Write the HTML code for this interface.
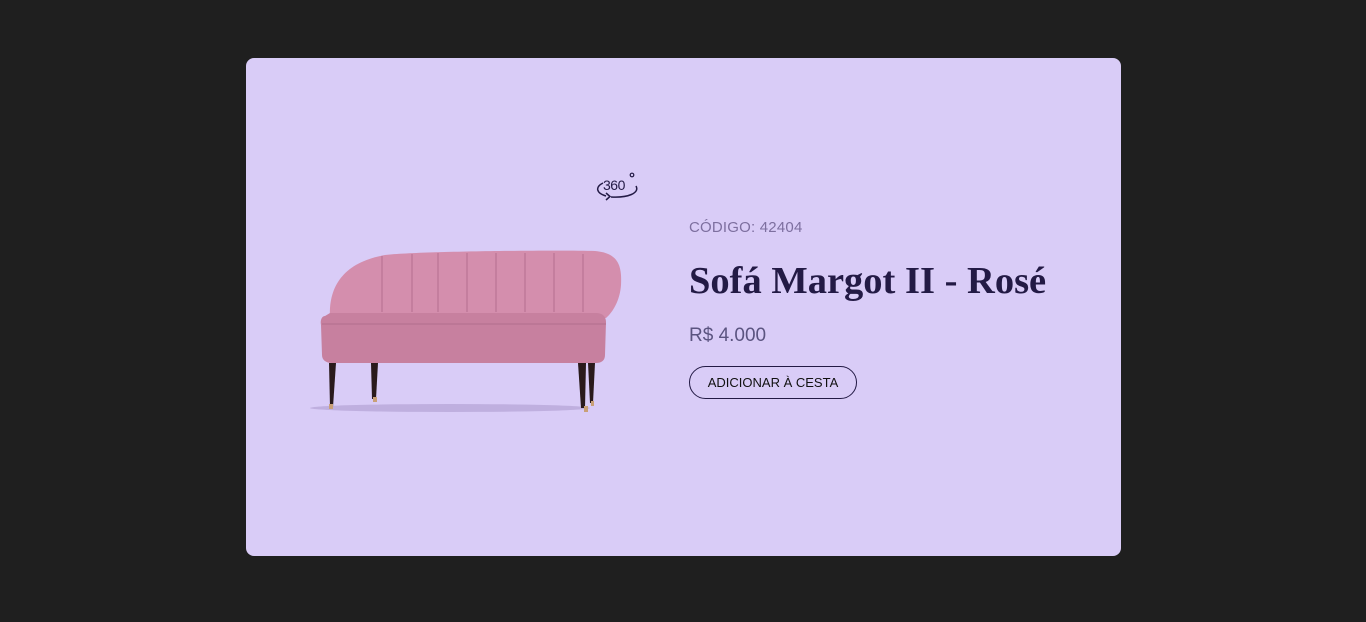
<!DOCTYPE html>
<html><head><meta charset="utf-8"><style>
html,body{margin:0;padding:0;background:#1f1f1f;width:1366px;height:622px;overflow:hidden}
.card{position:absolute;left:246px;top:58px;width:875px;height:498px;background:#d9ccf7;border-radius:8px}
.code{position:absolute;left:689px;top:219px;font:15px "Liberation Sans",sans-serif;color:#7d6f9f;letter-spacing:0.2px}
h1{position:absolute;left:689px;top:259px;margin:0;font:bold 38.5px "Liberation Serif",serif;color:#231a45;white-space:nowrap}
.price{position:absolute;left:689px;top:325px;font:19px "Liberation Sans",sans-serif;color:#5b5480}
.btn{position:absolute;left:689px;top:366px;width:168px;height:33px;border:1px solid #231a45;border-radius:17px;box-sizing:border-box;font:13px "Liberation Sans",sans-serif;color:#111;text-align:center;line-height:31px}
</style></head><body>
<div class="card"></div>
<svg style="position:absolute;left:0;top:0" width="1366" height="622">
 <ellipse cx="450" cy="408" rx="140" ry="4" fill="#b8a8d8" opacity=".8"/>
 <path d="M330 318 C328 285 345 262 385 255 C420 251 560 250 595 251 C618 253 622 265 621 285 C620 300 613 312 606 318 Z" fill="#d48ead"/>
 <g stroke="#b36f8e" stroke-width="1" fill="none">
  <path d="M382 256 V312"/><path d="M412 254 V312"/><path d="M438 253 V312"/><path d="M467 253 V312"/><path d="M496 253 V312"/><path d="M525 253 V312"/><path d="M554 253 V312"/><path d="M583 254 V312"/>
 </g>
 <path d="M325 316 C322 316 320 320 321 325 L322 355 C322 360 326 363 332 363 L596 363 C602 363 605 360 605 355 L606 322 C606 316 602 313 596 313 L330 313 Z" fill="#c7809f"/>
 <path d="M322 324 H606" stroke="#b06e8c" stroke-width="1"/>
 <g fill="#2a1a1c">
  <path d="M329 363 h7 l-3 44 h-3 z"/><path d="M371 363 h7 l-2 36 h-4 z"/>
  <path d="M578 363 h8 l-1 45 h-4 z"/><path d="M588 363 h7 l-2 40 h-3 z"/>
 </g>
 <g fill="#c9a077"><rect x="329" y="404" width="4" height="5"/><rect x="373" y="397" width="4" height="5"/><rect x="584" y="406" width="4" height="6"/><rect x="591" y="401" width="3" height="5"/></g>
 <text x="603" y="190" font-family="Liberation Sans,sans-serif" font-size="14" fill="#231a45" letter-spacing="-0.5">360</text>
 <circle cx="632" cy="175" r="1.8" fill="none" stroke="#231a45" stroke-width="1.2"/>
 <path d="M603 183 C595 187 596 193 606 196 M611 197 C628 198 640 193 636 186" fill="none" stroke="#231a45" stroke-width="1.5"/>
 <path d="M606 193 L610 196.5 L606 200" fill="none" stroke="#231a45" stroke-width="1.5"/>
</svg>
<div class="code">CÓDIGO: 42404</div>
<h1>Sofá Margot II - Rosé</h1>
<div class="price">R$ 4.000</div>
<div class="btn">ADICIONAR À CESTA</div>
</body></html>
